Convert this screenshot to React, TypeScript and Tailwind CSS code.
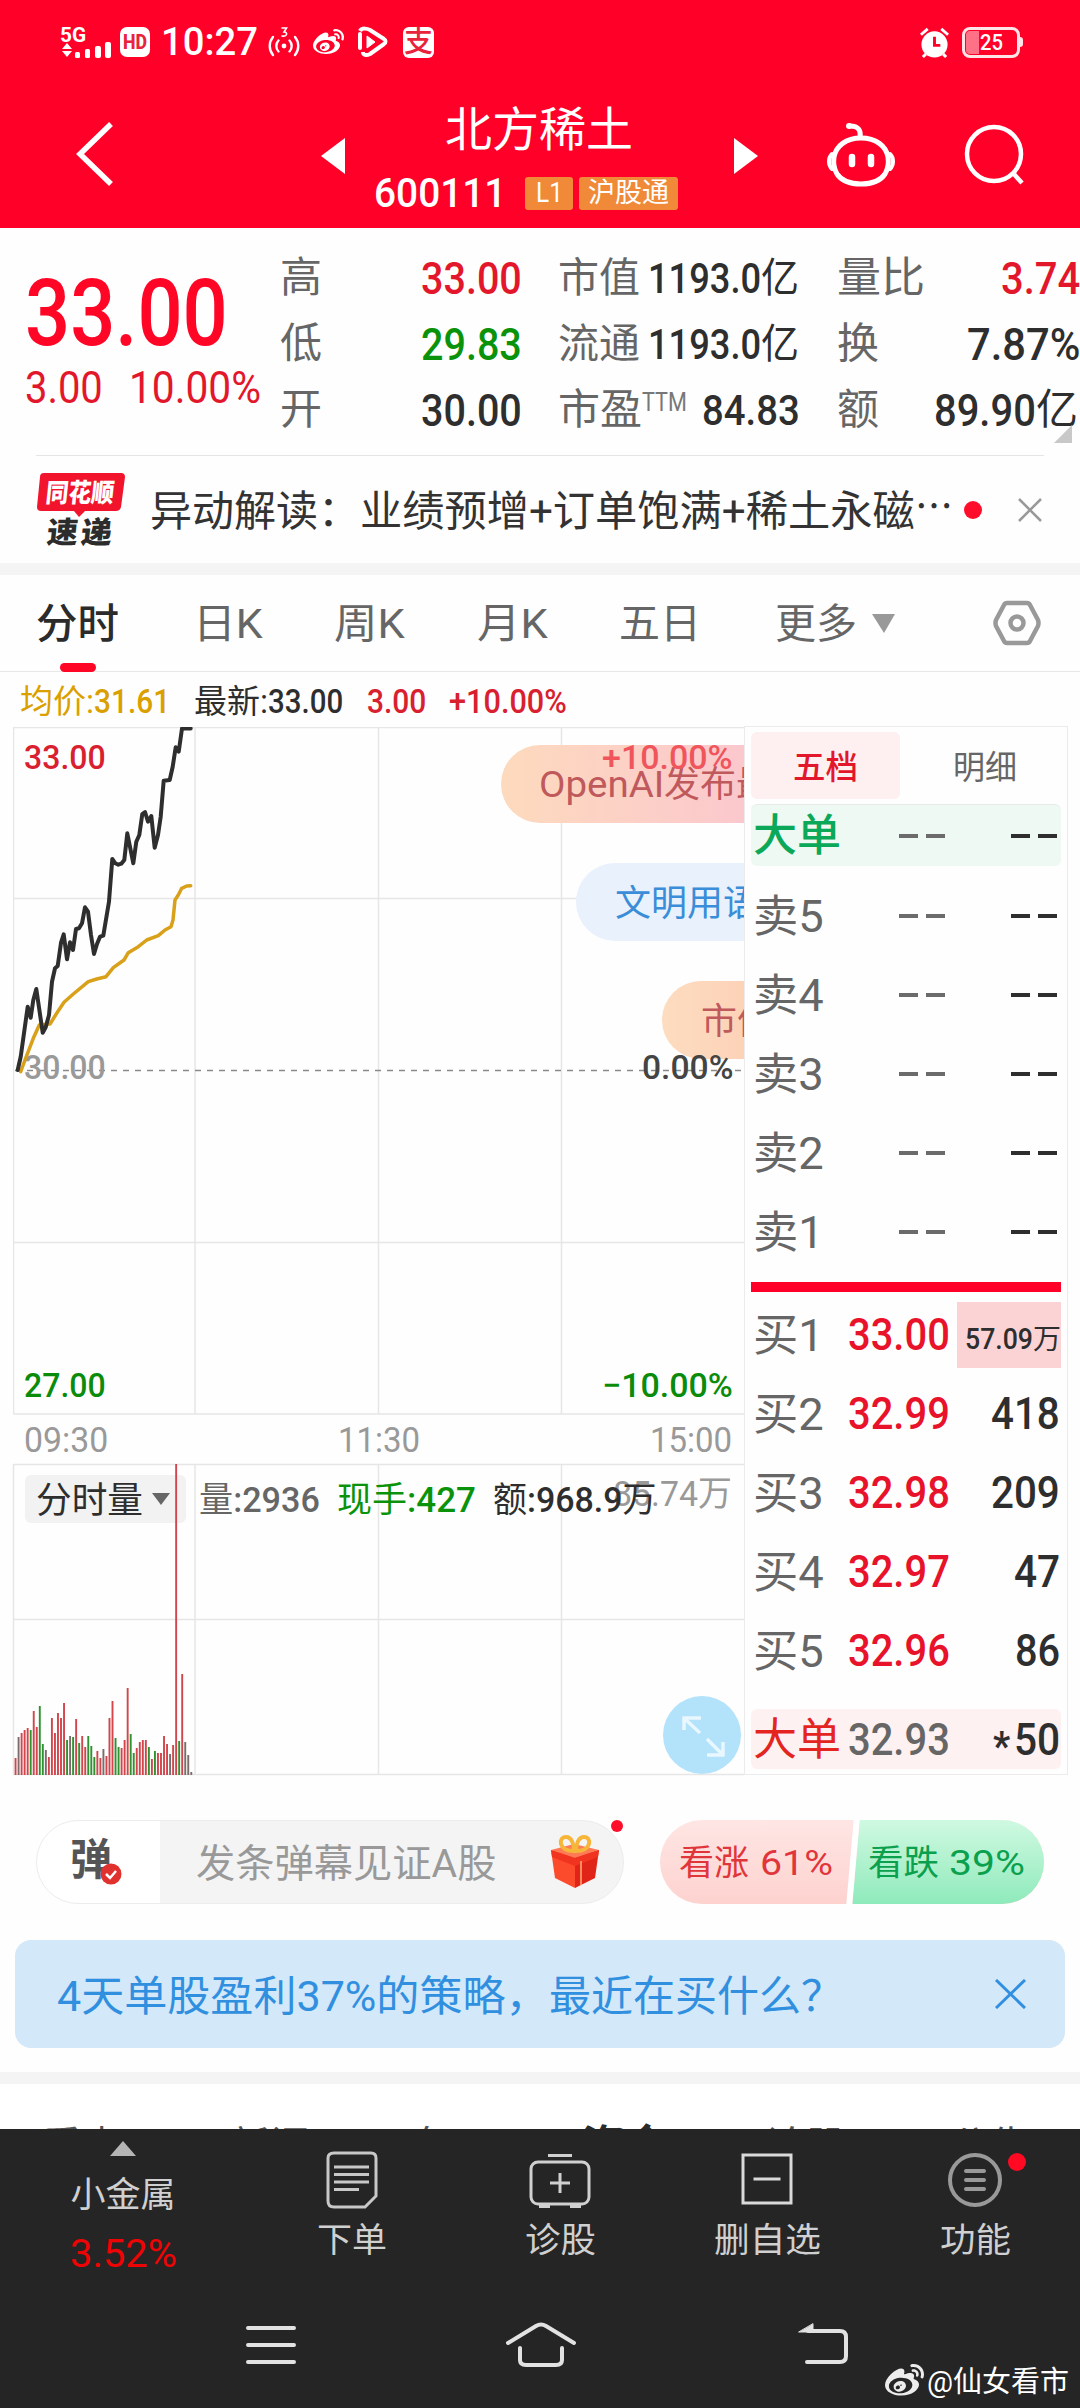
import React, { useLayoutEffect, useRef, useState } from 'react'
import { FaWeibo } from 'react-icons/fa'

interface FitProps {
  w: number
  className?: string
  children: React.ReactNode
}

const Fit: React.FC<FitProps> = ({ w, className, children }) => {
  const ref = useRef<HTMLSpanElement>(null)
  const [scale, setScale] = useState(1)

  useLayoutEffect(() => {
    if (ref.current) setScale(w / ref.current.offsetWidth)
  }, [w, children])

  return (
    <span className={`block shrink-0 whitespace-nowrap leading-none ${className ? className : ''}`} style={{ width: w }}>
      <span ref={ref} className="inline-block origin-left" style={{ transform: `scaleX(${scale})` }}>
        {children}
      </span>
    </span>
  )
}

const StatusBar = () => (
  <div className="flex h-[84px] items-center pl-[60px] pr-[60px] text-white">
    <div className="flex w-[60px] flex-col">
      <Fit w={26} className="text-[20px] font-bold">5G</Fit>
      <svg className="-mt-[4px] h-[18px] w-[52px]" viewBox="0 0 52 18" fill="#fff">
        <path d="M2 8 7 2l5 6zM2 10l5 6 5-6z" />
        <rect x="15" y="11" width="5" height="6" rx="1.5" />
        <rect x="25" y="8" width="5" height="9" rx="1.5" />
        <rect x="35" y="5" width="6" height="12" rx="2" />
        <rect x="45" y="1" width="6" height="16" rx="2" />
      </svg>
    </div>
    <div className="flex h-[30px] w-[30px] items-center justify-center rounded-[7px] bg-white">
      <Fit w={24} className="text-[20px] font-extrabold text-[#e8233c]">HD</Fit>
    </div>
    <Fit w={97} className="ml-[11px] text-[39px] font-medium">10:27</Fit>
    <svg className="ml-[10px] h-[34px] w-[32px]" viewBox="0 0 32 34" fill="none" stroke="#fff" strokeWidth="2.4" strokeLinecap="round">
      <circle cx="16" cy="21" r="2.4" fill="#fff" stroke="none" />
      <path d="M10.500 15.500a8 8 0 0 0 0 11M21.500 15.500a8 8 0 0 1 0 11M5 12a14 14 0 0 0 0 18M27 12a14 14 0 0 1 0 18" />
      <path d="M14 3h4.500l-2.500 4c4 0 3.500 5-2 4" strokeWidth="1.600" />
    </svg>
    <FaWeibo className="ml-[13px] h-[33px] w-[31px]" />
    <svg className="ml-[13px] h-[32px] w-[31px]" viewBox="0 0 31 32" fill="none" stroke="#fff" strokeWidth="4" strokeLinejoin="round">
      <path d="M3 5c2-4 8-2 10-1l14 9c2 1 2 4 0 5l-14 10c-4 2-7 1-7-2" />
      <path d="M3 8v14" strokeLinecap="round" />
      <path d="m10 10 8 6-8 6z" fill="#fff" strokeWidth="1" />
    </svg>
    <div className="ml-[15px] flex h-[31px] w-[31px] items-center justify-center rounded-[6px] bg-white text-[29px] font-medium leading-none text-[#e8233c]">
      支
    </div>
    <svg className="ml-auto h-[31px] w-[31px]" viewBox="0 0 32 32" fill="#fff">
      <circle cx="16" cy="18" r="13.500" />
      <path d="m2 8 7-6M30 8l-7-6M7 28l-3 3M25 28l3 3" stroke="#fff" strokeWidth="3" />
      <path d="M16 10v9h6" fill="none" stroke="#ff0029" strokeWidth="3" />
    </svg>
    <div className="relative ml-[12px] h-[31px] w-[58px] rounded-[8px] border-[3px] border-[#ffe4e7] p-[1px]">
      <div className="h-full w-[13px] rounded-l-[4px] bg-[#ff7186]" />
      <Fit w={23} className="absolute left-[15px] top-[2px] text-[22px] font-medium">25</Fit>
      <span className="absolute -right-[6px] top-[7px] h-[10px] w-[3px] rounded-r bg-[#ffe4e7]" />
    </div>
  </div>
)

const Header = () => (
  <header className="h-[228px] bg-[#ff0029] text-white">
    <StatusBar />
    <div className="flex h-[144px] items-start">
      <svg className="ml-[74px] mt-[37px] h-[66px] w-[42px]" viewBox="0 0 42 66" fill="none" stroke="#fff" strokeWidth="5.500">
        <path d="M37 3 6 33l31 30" />
      </svg>
      <svg className="ml-[205px] mt-[54px] h-[36px] w-[24px]" viewBox="0 0 24 36" fill="#fff">
        <path d="M24 0v36L0 18z" />
      </svg>
      <div className="ml-[24px] mt-[22px] w-[365px]">
        <Fit w={188} className="ml-[76px] text-[47px]">北方稀土</Fit>
        <div className="mt-[23px] flex h-[34px] items-center">
          <Fit w={132} className="ml-[5px] pt-[1px] text-[40px] font-medium">600111</Fit>
          <div className="ml-[19px] flex h-[33px] w-[48px] items-center justify-center rounded-[3px] bg-[#f08a38]">
            <Fit w={27} className="text-[28px]">L1</Fit>
          </div>
          <div className="ml-[6px] flex h-[33px] w-[99px] items-center justify-center rounded-[3px] bg-[#f08a38]">
            <Fit w={81} className="text-[27px]">沪股通</Fit>
          </div>
        </div>
      </div>
      <svg className="mt-[54px] h-[36px] w-[24px]" viewBox="0 0 24 36" fill="#fff">
        <path d="M0 0v36l24-18z" />
      </svg>
      <svg className="ml-[67px] mt-[37px] h-[66px] w-[72px]" viewBox="0 0 72 66" fill="none" stroke="#fff" strokeWidth="5" strokeLinecap="round">
        <path d="M36 17c15 0 25 8 27 19 1 7 0 12-3 17-4 6-11 10-24 10s-20-4-24-10c-3-5-4-10-3-17 2-11 12-19 27-19z" />
        <path d="M7 33c-4 4-4 11 0 15M65 33c4 4 4 11 0 15" strokeWidth="4" />
        <path d="M35 16c1-6-1-11-10-11" />
        <circle cx="24" cy="5" r="1" strokeWidth="4" />
        <path d="M27 36v7M46 36v7" strokeWidth="6.500" />
      </svg>
      <svg className="ml-[65px] mt-[39px] h-[64px] w-[64px]" viewBox="0 0 64 64" fill="none" stroke="#fff" strokeWidth="4.500">
        <circle cx="32" cy="31" r="27" />
        <path d="m51 50 9 10" />
      </svg>
    </div>
  </header>
)

const Quote = () => (
  <section className="relative flex h-[228px] pt-[17px]">
    <div className="w-[280px] shrink-0 pl-[25px] text-[#ff0526]">
      <Fit w={203} className="mt-[23px] text-[92px] font-medium">33.00</Fit>
      <div className="mt-[5px] flex text-[45px] text-[#e3172b]">
        <Fit w={78}>3.00</Fit>
        <Fit w={132} className="ml-[26px]">10.00%</Fit>
      </div>
    </div>
    <div className="w-[242px] text-[45px] font-medium text-[#2e2e2e]">
      <div className="flex h-[66px] items-center justify-between text-[#e3172b]">
        <Fit w={42} className="text-[42px] font-normal text-[#666]">高</Fit>
        <Fit w={101}>33.00</Fit>
      </div>
      <div className="flex h-[66px] items-center justify-between text-[#0a930a]">
        <Fit w={42} className="text-[42px] font-normal text-[#666]">低</Fit>
        <Fit w={101}>29.83</Fit>
      </div>
      <div className="flex h-[66px] items-center justify-between">
        <Fit w={42} className="text-[42px] font-normal text-[#666]">开</Fit>
        <Fit w={101}>30.00</Fit>
      </div>
    </div>
    <div className="ml-[36px] w-[242px] text-[45px] font-medium text-[#2e2e2e]">
      {['市值', '流通'].map((label) => (
        <div key={label} className="flex h-[66px] items-center">
          <Fit w={82} className="text-[41px] font-normal text-[#666]">{label}</Fit>
          <Fit w={113} className="ml-[8px] text-[43px]">1193.0</Fit>
          <Fit w={38} className="text-[41px] font-normal">亿</Fit>
        </div>
      ))}
      <div className="flex h-[66px] items-center">
        <Fit w={84} className="text-[42px] font-normal text-[#666]">市盈</Fit>
        <Fit w={45} className="mb-[15px] text-[25px] font-normal text-[#777]">TTM</Fit>
        <Fit w={98} className="ml-auto text-[43px]">84.83</Fit>
      </div>
    </div>
    <div className="ml-[37px] w-[243px] text-[45px] font-medium text-[#2e2e2e]">
      <div className="flex h-[66px] items-center justify-between">
        <Fit w={88} className="text-[42px] font-normal text-[#666]">量比</Fit>
        <Fit w={79} className="text-[#e3172b]">3.74</Fit>
      </div>
      <div className="flex h-[66px] items-center justify-between">
        <Fit w={42} className="text-[42px] font-normal text-[#666]">换</Fit>
        <Fit w={113}>7.87%</Fit>
      </div>
      <div className="flex h-[66px] items-center">
        <Fit w={42} className="text-[42px] font-normal text-[#666]">额</Fit>
        <Fit w={102} className="ml-auto">89.90</Fit>
        <Fit w={42} className="mr-[2px] text-[42px] font-normal">亿</Fit>
      </div>
    </div>
    <svg className="absolute bottom-[13px] right-[8px] h-[18px] w-[18px]" viewBox="0 0 18 18">
      <path d="M18 0v18H0z" fill="#c8c8c8" />
    </svg>
    <div className="absolute bottom-0 left-[36px] right-[36px] h-px bg-[#e4e4e4]" />
  </section>
)

const News = () => (
  <section className="flex h-[107px] items-center pl-[37px]">
    <div className="relative h-[74px] w-[90px] text-center font-black leading-none">
      <svg className="absolute left-0 top-0 h-[45px] w-[90px]" viewBox="0 0 90 45" fill="#f2132c">
        <path d="M7 0h77q4 0 4 4l-4 30q-1 4-5 4H48l-6 6-5-6H4q-4 0-4-4L3 4q0-4 4-4z" />
      </svg>
      <Fit w={68} className="absolute left-[9px] top-[7px] -skew-x-6 text-[26px] text-white">同花顺</Fit>
      <div className="absolute left-[9px] top-[45px] flex -skew-x-6 gap-[3px] text-[30px] text-[#2c2c2c]">
        <Fit w={31}>速</Fit>
        <Fit w={31}>递</Fit>
      </div>
    </div>
    <div className="flex pt-[5px] text-[42px] text-[#333]">
      <Fit w={210} className="ml-[23px]">异动解读：</Fit>
      <Fit w={555}>业绩预增+订单饱满+稀土永磁</Fit>
      <Fit w={38} className="-mt-[3px] text-[40px]">⋯</Fit>
    </div>
    <span className="ml-[11px] h-[18px] w-[18px] rounded-full bg-[#ff0e2b]" />
    <svg className="ml-[36px] h-[24px] w-[24px]" viewBox="0 0 24 24" stroke="#999" strokeWidth="2.500">
      <path d="m1 1 22 22M23 1 1 23" />
    </svg>
  </section>
)

const PeriodTabs = () => (
  <nav className="flex h-[97px] items-center border-b border-[#e8e8e8] text-[41px] text-[#666]">
    <div className="relative ml-[36px] pt-[3px] text-[#2b2b2b]">
      <Fit w={83} className="font-medium">分时</Fit>
      <span className="absolute -bottom-[27px] left-[24px] h-[9px] w-[36px] rounded-full bg-[#ff0526]" />
    </div>
    <div className="flex pt-[3px]">
      <Fit w={70} className="ml-[74px]">日K</Fit>
      <Fit w={71} className="ml-[71px]">周K</Fit>
      <Fit w={71} className="ml-[72px]">月K</Fit>
      <Fit w={82} className="ml-[71px]">五日</Fit>
      <Fit w={82} className="ml-[74px]">更多</Fit>
    </div>
    <svg className="ml-[15px] h-[19px] w-[23px]" viewBox="0 0 23 19" fill="#999">
      <path d="M0 0h23L12 19z" />
    </svg>
    <svg className="ml-[97px] h-[48px] w-[50px]" viewBox="0 0 50 48" fill="none" stroke="#999" strokeWidth="4.500" strokeLinejoin="round">
      <path d="M15 4h20q2 0 3 2l8 15q1 3 0 6l-8 15q-1 2-3 2H15q-2 0-3-2L4 27q-1-3 0-6l8-15q1-2 3-2z" />
      <circle cx="25" cy="24" r="6.500" />
    </svg>
  </nav>
)

const pricePoints =
  '4.7,343 7.7,329.7 14.7,279.7 17.7,290.7 20.3,273 23.3,262 29.7,305.7 32.7,300.3 36,288 39,254.7 42,241.3 44.7,239 48,215.7 50.7,207.3 54,232.3 57,215.3 60,223 63,202 66,201.3 69,196.3 72,180.3 75,184.7 78,208 81,227 84,217 87,209.7 90.3,208.7 96,174.7 99.3,132 102.3,136.3 105.3,137.7 108.3,136.7 111.3,133 114.3,106.3 117.3,121.3 120.3,136.3 123.3,114.7 126.3,108 129.3,87 132,85 135,94.7 138.3,89 141.7,120.7 145,108 147.7,89.7 150.7,53.7 156.7,53 159.7,39.7 162.7,20.3 165.7,24.7 169,1.5 177.7,1.5'
const avgPoints =
  '7.7,344.7 12,333 20.3,311.3 26.3,298 37,297 43.7,286.3 51,275.3 60.3,267 75.3,254.7 83.7,252 93,249.7 100.3,240.7 111,233 115.3,225.7 125.3,219.7 133.7,213 145.3,208.7 152,203 158,199.7 160,193 162,173 165.3,168 168.7,161.3 173.7,159 177.7,158.7'

const PriceChart = () => (
  <div className="relative h-[688px] overflow-hidden">
    <svg className="absolute inset-0 h-full w-full overflow-visible" viewBox="0 0 731 688" fill="none">
      <path d="M.5 .5H731M.5 171.500H731M.5 515.500H731M.5 687H731M.5 0V687M182 0V687M365.500 0V687M548.500 0V687" stroke="#e6e6e6" strokeWidth="1.500" />
      <path d="M2 343.500H731" stroke="#8a8a8a" strokeWidth="1.500" strokeDasharray="6 6" />
    </svg>
    <Fit w={82} className="absolute left-[11px] top-[323px] text-[34px] font-medium text-[#999]">30.00</Fit>
    <svg className="absolute inset-0 h-full w-full" viewBox="0 0 731 688" fill="none" strokeLinejoin="round" strokeLinecap="round">
      <polyline points={avgPoints} stroke="#d9a01a" strokeWidth="3.500" />
      <polyline points={pricePoints} stroke="#2e2e2e" strokeWidth="4" />
    </svg>
    <div className="absolute left-[488px] top-[18px] flex h-[78px] w-[300px] items-center rounded-full bg-gradient-to-r from-[#fddabd] via-[#fbc8cd] via-80% to-[#fbc5d0] pl-[38px] pt-[2px] text-[36px] text-[#c0595b]">
      <Fit w={125}>OpenAI</Fit>
      <Fit w={108}>发布最</Fit>
    </div>
    <div className="absolute left-[563px] top-[136px] flex h-[78px] w-[300px] items-center rounded-full bg-[#e9f1fc] pl-[39px] pt-[4px] text-[36px] text-[#3a8dd8]">
      <Fit w={144}>文明用语</Fit>
    </div>
    <div className="absolute left-[649px] top-[254px] flex h-[78px] w-[300px] items-center rounded-full bg-gradient-to-r from-[#fddcc0] to-[#fab9a0] pl-[39px] pt-[4px] text-[36px] text-[#c0595b]">
      <Fit w={72}>市值</Fit>
    </div>
    <div className="absolute inset-0 text-[34px] font-medium">
      <Fit w={82} className="absolute left-[11px] top-[13px] text-[#d8202f]">33.00</Fit>
      <Fit w={131} className="absolute right-[11px] top-[13px] text-[#f0555c]">+10.00%</Fit>
      <Fit w={91} className="absolute right-[11px] top-[323px] text-[#444]">0.00%</Fit>
      <Fit w={82} className="absolute left-[11px] top-[641px] text-[#0a8c0a]">27.00</Fit>
      <Fit w={131} className="absolute right-[11px] top-[641px] text-[#0a8c0a]">−10.00%</Fit>
    </div>
  </div>
)

// [height, colour] per minute: r up, g down, k flat
const volumes: [number, string][] = [
  [17, 'r'], [38, 'k'], [42, 'r'], [45, 'r'], [47, 'r'], [45, 'g'], [64, 'r'], [48, 'r'], [69, 'g'], [31, 'g'],
  [25, 'k'], [18, 'r'], [57, 'r'], [42, 'r'], [62, 'r'], [57, 'r'], [72, 'r'], [35, 'g'], [39, 'k'], [38, 'g'],
  [56, 'r'], [32, 'g'], [39, 'r'], [28, 'r'], [39, 'g'], [29, 'g'], [18, 'g'], [24, 'r'], [17, 'r'], [26, 'k'],
  [19, 'r'], [57, 'r'], [74, 'r'], [37, 'g'], [28, 'g'], [27, 'r'], [35, 'r'], [87, 'r'], [41, 'g'], [22, 'g'],
  [27, 'r'], [33, 'r'], [35, 'r'], [35, 'r'], [28, 'g'], [16, 'r'], [24, 'g'], [22, 'r'], [22, 'r'], [39, 'r'],
  [31, 'r'], [21, 'k'], [30, 'r'], [312, 'r'], [34, 'g'], [101, 'r'], [33, 'k'], [20, 'k'], [3, 'k'],
]
const volumeColors: Record<string, string> = { r: '#d2454c', g: '#2f9130', k: '#7b6c6c' }

const VolumeChart = () => (
  <div className="relative h-[311px]">
    <svg className="absolute inset-0 h-full w-full overflow-visible" viewBox="0 0 731 311" fill="none">
      <path d="M.5 .5H731M.5 155.500H731M.5 310.500H731M.5 0V311M182 0V311M365.500 0V311M548.500 0V311" stroke="#e6e6e6" strokeWidth="1.500" />
    </svg>
    <div className="absolute left-[12px] top-[11px] flex h-[48px] w-[161px] items-center rounded-[6px] bg-[#f2f2f2] pl-[11px] text-[36px] text-[#2e2e2e]">
      <Fit w={107} className="pt-[3px]">分时量</Fit>
      <svg className="ml-[9px] h-[12px] w-[18px]" viewBox="0 0 18 12" fill="#666">
        <path d="M0 0h18l-9 12z" />
      </svg>
    </div>
    <svg className="absolute inset-0 h-full w-full" viewBox="0 0 731 311">
      {volumes.map(([h, c], i) => (
        <rect key={i} x={1.600 + i * 3.030} y={311 - h} width="1.900" height={h} fill={volumeColors[c]} />
      ))}
    </svg>
    <Fit w={119} className="absolute right-[12px] top-[13px] text-[35px] font-normal text-[#999]">85.74万</Fit>
    <div className="absolute left-[186px] top-[19px] flex text-[35px] font-medium">
      <Fit w={121} className="text-[#666]"><span className="font-normal">量</span>:2936</Fit>
      <Fit w={139} className="ml-[17px] text-[#0a930a]"><span className="font-normal">现手</span>:427</Fit>
      <Fit w={164} className="ml-[17px] text-[#2e2e2e]"><span className="font-normal">额</span>:968.9<span className="font-normal">万</span></Fit>
    </div>
    <svg className="absolute bottom-[1px] right-[3px] h-[78px] w-[78px]" viewBox="0 0 78 78" fill="none" stroke="#e9f7ff" strokeWidth="3.500">
      <circle cx="39" cy="39" r="39" fill="#b3e2fb" stroke="none" />
      <path d="m22 23 15 14M21 34V22h17M44 43l15 15M60 46v13H44" />
    </svg>
  </div>
)

const Dashes: React.FC<{ className: string }> = ({ className }) => (
  <div className="flex gap-[8px]">
    <span className={`h-[4px] w-[19px] ${className}`} />
    <span className={`h-[4px] w-[19px] ${className}`} />
  </div>
)

const bids = [
  { label: '买2', price: '32.99', vol: '418', w: 69 },
  { label: '买3', price: '32.98', vol: '209', w: 69 },
  { label: '买4', price: '32.97', vol: '47', w: 46 },
  { label: '买5', price: '32.96', vol: '86', w: 45 },
]

const OrderBook = () => (
  <div className="h-[1049px] w-[324px] border border-[#ebebeb] px-[6px] text-[44px]">
    <div className="flex h-[77px] items-center text-[33px]">
      <div className="flex h-[67px] w-[149px] items-center justify-center rounded-[6px] bg-[#fef0f1] pt-[3px] text-[#e3172b]">
        <Fit w={65} className="font-medium">五档</Fit>
      </div>
      <Fit w={64} className="ml-[53px] pt-[3px] text-[#666]">明细</Fit>
    </div>
    <div className="flex h-[62px] items-center rounded-[6px] border-t border-[#e8ece9] bg-[#eef9f3] pl-[2px] pr-[4px]">
      <Fit w={88} className="font-medium text-[#0aa858]">大单</Fit>
      <div className="ml-[58px] flex w-full justify-between">
        <Dashes className="bg-[#6b6b6b]" />
        <Dashes className="bg-[#2e2e2e]" />
      </div>
    </div>
    <div className="mt-[10px]">
      {['卖5', '卖4', '卖3', '卖2', '卖1'].map((label) => (
        <div key={label} className="flex h-[79px] items-center pl-[2px] pr-[4px] text-[#666]">
          <Fit w={71} className="pt-[2px]">{label}</Fit>
          <div className="ml-[75px] flex w-full justify-between">
            <Dashes className="bg-[#6b6b6b]" />
            <Dashes className="bg-[#2e2e2e]" />
          </div>
        </div>
      ))}
    </div>
    <div className="mt-[11px] h-[10px] bg-[#ff0029]" />
    <div className="mt-[3px] flex h-[79px] items-center pl-[2px]">
      <Fit w={71} className="pt-[2px] text-[#666]">买1</Fit>
      <Fit w={102} className="ml-[24px] text-[45px] font-medium text-[#e8122a]">33.00</Fit>
      <div className="ml-auto flex h-[66px] w-[104px] items-center justify-end bg-[#fbd3d5] pt-[10px] text-[#2e2e2e]">
        <Fit w={68} className="text-[29px] font-medium">57.09</Fit>
        <Fit w={28} className="text-[28px]">万</Fit>
      </div>
    </div>
    {bids.map((bid) => (
      <div key={bid.label} className="flex h-[79px] items-center pl-[2px] pr-px text-[45px]">
        <Fit w={71} className="pt-[2px] text-[44px] text-[#666]">{bid.label}</Fit>
        <Fit w={102} className="ml-[24px] font-medium text-[#e8122a]">{bid.price}</Fit>
        <Fit w={bid.w} className="ml-auto font-medium text-[#2e2e2e]">{bid.vol}</Fit>
      </div>
    ))}
    <div className="mt-[19px] flex h-[60px] items-center rounded-[6px] bg-[#fef1f1] pl-[2px] text-[45px]">
      <Fit w={88} className="pt-[2px] text-[44px] text-[#e3241f]">大单</Fit>
      <Fit w={102} className="ml-[7px] font-medium text-[#666]">32.93</Fit>
      <Fit w={17} className="ml-auto pt-[16px] text-[40px] font-bold text-[#2e2e2e]">*</Fit>
      <Fit w={46} className="ml-[4px] mr-px font-medium text-[#2e2e2e]">50</Fit>
    </div>
  </div>
)

const Danmaku = () => (
  <section className="flex h-[84px] pl-[36px] pr-[36px]">
    <div className="relative flex w-[588px] items-center rounded-full border border-[#ececec] bg-gradient-to-r from-white from-[123px] to-[#f4f4f4] to-[123px]">
      <div className="relative ml-[33px] w-[41px] pb-[3px]">
        <Fit w={42} className="text-[43px] font-bold text-[#555]">弹</Fit>
        <svg className="absolute -right-[11px] top-[24px] h-[22px] w-[22px]" viewBox="0 0 22 22">
          <circle cx="11" cy="11" r="10.500" fill="#e0312f" />
          <path d="m6 11 4 4 6-7" fill="none" stroke="#fff" strokeWidth="2.500" />
        </svg>
      </div>
      <Fit w={300} className="ml-[85px] pt-[4px] text-[39px] text-[#999]">发条弹幕见证A股</Fit>
      <svg className="ml-[54px] h-[54px] w-[50px]" viewBox="0 0 50 54">
        <path d="M1 15 25 21v32L5 43z" fill="#fb4a2c" />
        <path d="M49 15 25 21v32l20-10z" fill="#e02418" />
        <path d="M1 15 24 9l25 6-24 8z" fill="#ff7a55" />
        <path d="m1 15 24 8v8L2 22zM49 15l-24 8v8l23-9z" fill="#f0341f" />
        <path d="M24 16C8 16 8 2 16 2c6 0 8 8 8 14zM26 16C42 16 42 2 34 2c-6 0-8 8-8 14z" fill="none" stroke="#f5b63a" strokeWidth="4" />
        <path d="M31 26v24" stroke="#ff8a5c" strokeWidth="2" />
      </svg>
      <span className="absolute right-0 -top-[1px] h-[12px] w-[12px] rounded-full bg-[#ff0e2b]" />
    </div>
    <div className="relative ml-[36px] flex w-[384px] items-center overflow-hidden rounded-full bg-gradient-to-b from-[#fee6e4] to-[#fdd2cf] pt-[2px] text-[35px]">
      <div className="absolute -right-[5px] top-0 h-full w-[199px] -skew-x-[5deg] border-l-[6px] border-white bg-gradient-to-b from-[#cff9e2] to-[#8eeabb]" />
      <Fit w={70} className="ml-[19px] text-[#e0353b]">看涨</Fit>
      <Fit w={73} className="ml-[11px] text-[#e0353b]">61%</Fit>
      <Fit w={71} className="relative ml-[35px] text-[#0aa04e]">看跌</Fit>
      <Fit w={76} className="relative ml-[10px] text-[#0aa04e]">39%</Fit>
    </div>
  </section>
)

const infoTabs = [
  { label: '看点', className: 'left-[42px]' },
  { label: '新闻', className: 'left-[230px]' },
  { label: '盘口', className: 'left-[407px]' },
  { label: '论股', className: 'left-[766px]' },
  { label: '公告', className: 'left-[950px]' },
]

const InfoTabs = () => (
  <div className="relative h-[45px] overflow-hidden bg-white text-[40px] leading-none text-[#555]">
    {infoTabs.map((tab) => (
      <span key={tab.label} className={`absolute top-[43px] ${tab.className}`}>{tab.label}</span>
    ))}
    <span className="absolute left-[582px] top-[41px] text-[43px] font-bold text-[#2b2b2b]">资金</span>
  </div>
)

const BottomBar = () => (
  <footer className="relative h-[279px] bg-[#252525] text-[34px] text-[#d0d0d0]">
    <div className="flex h-[150px] items-start">
      <div className="ml-[69px] flex w-[108px] flex-col items-center pt-[12px]">
        <svg className="h-[15px] w-[26px]" viewBox="0 0 26 15" fill="#b5b5b5">
          <path d="M13 0 26 15H0z" />
        </svg>
        <Fit w={105} className="mt-[22px] text-[35px]">小金属</Fit>
        <Fit w={107} className="mt-[22px] text-[38px] text-[#ee0404]">3.52%</Fit>
      </div>
      <div className="ml-[139px] flex w-[72px] flex-col items-center pt-[21px]">
        <svg className="h-[60px] w-[54px]" viewBox="0 0 54 60" fill="none" stroke="#c8c8c8" strokeWidth="3">
          <path d="M9 3h37q5 0 5 5v38L40 57H9q-6 0-6-6V8q0-5 6-5z" />
          <path d="M9 17h35M9 24.500h35M9 32h35M9 39.500h25" />
        </svg>
        <Fit w={70} className="mt-[13px]">下单</Fit>
      </div>
      <div className="ml-[136px] flex w-[72px] flex-col items-center pt-[24px]">
        <svg className="h-[57px] w-[62px]" viewBox="0 0 62 57" fill="none" stroke="#d0d0d0" strokeWidth="3">
          <path d="M19 2.500h24" />
          <rect x="2" y="9" width="58" height="42" rx="7" />
          <path d="M31 20v20M21 30h20M10 53.500h11M41 53.500h11" />
        </svg>
        <Fit w={71} className="mt-[13px]">诊股</Fit>
      </div>
      <div className="ml-[117px] flex w-[108px] flex-col items-center pt-[24px]">
        <svg className="h-[52px] w-[52px]" viewBox="0 0 52 52" fill="none" stroke="#dadada" strokeWidth="3">
          <path d="M2 2h48v48H2zM12.500 26h27" />
        </svg>
        <Fit w={107} className="mt-[18px]">删自选</Fit>
      </div>
      <div className="relative ml-[118px] flex w-[72px] flex-col items-center pt-[24px]">
        <svg className="h-[54px] w-[54px]" viewBox="0 0 54 54" fill="none" stroke="#999" strokeWidth="4" strokeLinecap="round">
          <circle cx="27" cy="27" r="25" />
          <path d="M18 18h18M18 27h18M18 36h18" />
        </svg>
        <span className="absolute -right-[15px] top-[24px] h-[18px] w-[18px] rounded-full bg-[#ff0a22]" />
        <Fit w={71} className="mt-[16px]">功能</Fit>
      </div>
    </div>
    <div className="flex h-[129px] items-start pt-[42px]">
      <svg className="ml-[245px] h-[46px] w-[52px]" viewBox="0 0 52 46" stroke="#e2e2e2" strokeWidth="4" strokeLinecap="round">
        <path d="M3 7h46M3 24h46M3 41h46" />
      </svg>
      <svg className="ml-[207px] h-[50px] w-[74px]" viewBox="0 0 74 50" fill="none" stroke="#e2e2e2" strokeWidth="4" strokeLinecap="round">
        <path d="M4 22 32 5q5-3 10 0l28 17M16 27v12q0 5 6 5h30q6 0 6-5V27" />
      </svg>
      <svg className="ml-[218px] h-[46px] w-[54px]" viewBox="0 0 54 46" fill="none" stroke="#e2e2e2" strokeWidth="4" strokeLinecap="round">
        <path d="M12 10h32q6 0 6 6v19q0 6-6 6H11" />
        <path d="M17 3v8H3z" fill="#e2e2e2" strokeWidth="1" />
      </svg>
    </div>
    <div className="absolute bottom-[7px] right-[11px] flex items-center text-[29px] text-white">
      <FaWeibo className="h-[40px] w-[39px] text-[#ececec]" />
      <Fit w={142} className="ml-[3px] pt-[2px]">@仙女看市</Fit>
    </div>
  </footer>
)

const App: React.FC = () => {
  return (
    <div className="h-[2408px] w-[1080px] overflow-hidden bg-[#fefefe] font-['Roboto','Noto_Sans_CJK_SC',sans-serif]">
      <Header />
      <Quote />
      <News />
      <div className="h-[12px] bg-[#f4f4f4]" />
      <PeriodTabs />
      <div className="flex h-[54px] items-center pl-[20px] pt-[4px] text-[33px] text-[#2e2e2e]">
        <Fit w={74} className="text-[#daa000]">均价:</Fit>
        <Fit w={76} className="font-medium text-[#daa000]">31.61</Fit>
        <Fit w={74} className="ml-[24px]">最新:</Fit>
        <Fit w={75} className="font-medium">33.00</Fit>
        <Fit w={59} className="ml-[24px] font-medium text-[#d8202f]">3.00</Fit>
        <Fit w={118} className="ml-[23px] font-medium text-[#d8202f]">+10.00%</Fit>
      </div>
      <div className="flex pl-[13px]">
        <div className="w-[731px]">
          <div className="h-px" />
          <PriceChart />
          <div className="flex h-[49px] items-center justify-between pl-[11px] pr-[12px] pt-[1px] text-[35px] text-[#999]">
            <Fit w={84}>09:30</Fit>
            <Fit w={82}>11:30</Fit>
            <Fit w={82}>15:00</Fit>
          </div>
          <VolumeChart />
        </div>
        <OrderBook />
      </div>
      <div className="h-[45px]" />
      <Danmaku />
      <div className="mx-[15px] mt-[36px] flex h-[108px] items-center rounded-[16px] bg-[#d3e8f9] pl-[42px] pr-[39px] text-[42px] text-[#318fe0]">
        <Fit w={492} className="pt-[5px]">4天单股盈利37%的策略，</Fit>
        <Fit w={294} className="pt-[5px]">最近在买什么？</Fit>
        <svg className="ml-auto h-[30px] w-[31px]" viewBox="0 0 31 30" stroke="#318fe0" strokeWidth="3">
          <path d="m1 1 29 28M30 1 1 29" />
        </svg>
      </div>
      <div className="mt-[24px] h-[12px] bg-[#f4f4f4]" />
      <InfoTabs />
      <BottomBar />
    </div>
  )
}

export default App
